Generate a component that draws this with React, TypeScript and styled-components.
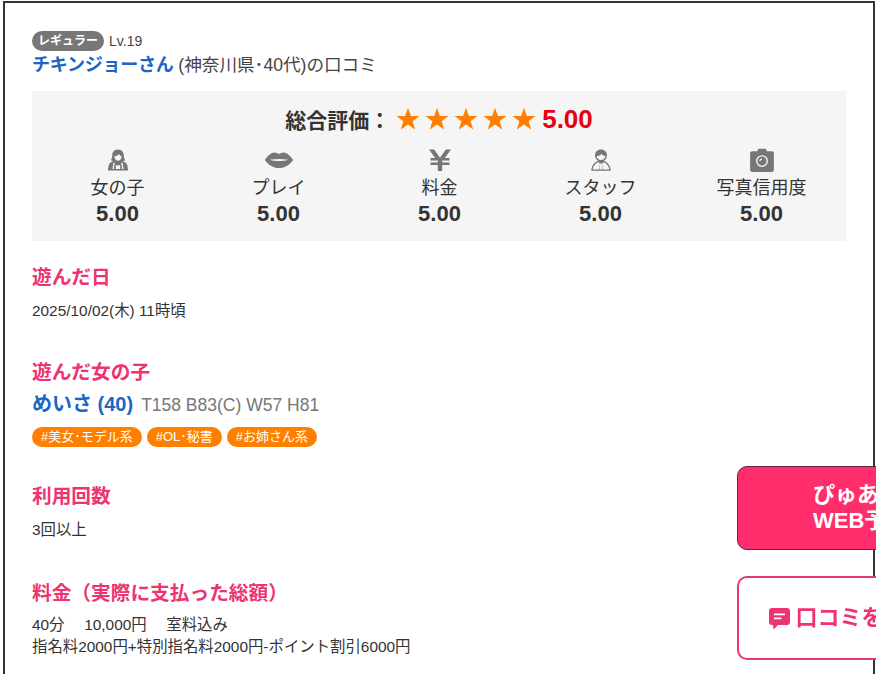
import React from "react";
import styled, { createGlobalStyle } from "styled-components";

const Global = createGlobalStyle`
  html, body { margin: 0; padding: 0; background: #fff; overflow: hidden; }
  body { font-family: "Liberation Sans", "Noto Sans CJK JP", sans-serif; color: #333; }
`;
const Frame = styled.div`
  box-sizing: border-box; width: 872px; height: 673px; margin: 1px 0 0 3px;
  border: 2px solid #333; border-bottom: 0; padding: 28px 27px 0; overflow: hidden;
`;
const Meta = styled.div`display: flex; align-items: center; gap: 5px; height: 20px;`;
const RankBadge = styled.span`
  display: flex; align-items: center; justify-content: center; width: 72px; height: 20px;
  border-radius: 10px; background: #777; color: #fff; font-size: 12px; font-weight: 700; line-height: 20px;
`;
const Level = styled.span`font-size: 14px; color: #444;`;
const ReviewerLine = styled.div`font-size: 17.6px; line-height: 26px; margin-top: 1px; color: #444; white-space: nowrap;`;
const Reviewer = styled.span`font-size: 18px; font-weight: 700; color: #1a66c4; letter-spacing: -0.25px;`;
const Panel = styled.div`
  margin-top: 13px; height: 150px; box-sizing: border-box; background: #f5f5f5; padding: 12px 5px 0;
`;
const TotalRow = styled.div`display: flex; justify-content: center; align-items: center; height: 32px;`;
const TotalLabel = styled.span`font-size: 21px; font-weight: 700; color: #333; margin-right: 6px;`;
const Stars = styled.span`display: flex; gap: 5px; margin-right: 6px;`;
const TotalScore = styled.span`font-size: 26px; font-weight: 700; color: #e60012;`;
const Scores = styled.div`display: grid; grid-template-columns: repeat(5, 161px); margin-top: 13px;`;
const ScoreItem = styled.div`display: flex; flex-direction: column; align-items: center;`;
const ScoreIcon = styled.svg`width: 24px; height: 24px; display: block; fill: #777;`;
const LipsIcon = styled(ScoreIcon)`width: 30px;`;
const CameraIcon = styled(ScoreIcon)`width: 26px; height: 26px; margin: -1px 0;`;
const ScoreLabel = styled.div`font-size: 18px; line-height: 26px; color: #333; margin-top: 3px; white-space: nowrap;`;
const ScoreValue = styled.div`font-size: 22px; font-weight: 700; line-height: 28px; color: #333; margin-top: -1px;`;
const Section = styled.section<{ $top: number }>`margin-top: ${(p) => p.$top}px;`;
const Heading = styled.h3`margin: 0; font-size: 19.7px; line-height: 28px; font-weight: 700; color: #ee3370;`;
const Body = styled.p<{ $top?: number }>`margin: ${(p) => p.$top ?? 9}px 0 0; font-size: 15.4px; line-height: 22px; color: #333;`;
const GirlLine = styled.div`display: flex; align-items: baseline; gap: 8px; margin-top: 3px; line-height: 30px;`;
const GirlName = styled.span`font-size: 20px; font-weight: 700; color: #1a66c4;`;
const GirlSpec = styled.span`font-size: 17.5px; color: #777;`;
const Tags = styled.div`display: flex; gap: 5px; margin-top: 7px;`;
const Tag = styled.span`
  height: 20px; line-height: 20px; padding: 0 9px; border-radius: 10px; background: #ff7f00;
  color: #fff; font-size: 13px; white-space: nowrap;
`;
const FloatButton = styled.div<{ $top: number; $outline?: boolean }>`
  position: fixed; left: 737px; top: ${(p) => p.$top}px; width: 260px; height: 84px; box-sizing: border-box;
  border-radius: 10px; display: flex; align-items: center; justify-content: center;
  font-size: 22px; font-weight: 700; line-height: 26px;
  background: ${(p) => (p.$outline ? "#fff" : "#ff2d6b")};
  color: ${(p) => (p.$outline ? "#ee3370" : "#fff")};
  border: ${(p) => (p.$outline ? "2px solid #e8376f" : "1px solid #5a2a3c")};
`;
const ButtonLines = styled.div`display: flex; flex-direction: column; align-items: flex-start; padding-left: 2px;`;
const ButtonRow = styled.div`display: flex; align-items: center; gap: 4px; padding-left: 6px;`;

const Star = () => (
  <svg width="24" height="24" viewBox="0 0 24 24" fill="#ff7f00"><path d="M12 1l2.9 8.1h8.6l-6.9 5.1 2.6 8.3L12 17.4l-7.2 5.1 2.6-8.3L.5 9.100h8.600z" /></svg>
);
const Girl = () => (
  <ScoreIcon viewBox="0 0 24 24"><path d="M12 1.500c-4 0-5.800 2.800-5.800 6 0 2.200-.6 3.600-1.400 4.800l2.500 1c-2.800 1-4.300 2.300-4.800 4.700l-.6 4.500h20.200l-.6-4.500c-.5-2.400-2-3.700-4.800-4.700l2.500-1c-.8-1.200-1.400-2.600-1.400-4.800 0-3.200-1.800-6-5.800-6zM8.300 8.300c1.800-.1 3.600-.8 4.700-2.300.6 1.200 1.500 2 2.700 2.300-.1 2.700-1.700 4.500-3.700 4.500s-3.600-1.800-3.700-4.500zM8 14.500l1.300 1.200c-1 .4-1.200 1.300-1.200 2.300v3h-1.600l.5-4c.1-1 .4-1.800 1-2.500zm8 0c.6.700.9 1.500 1 2.500l.5 4h-1.600v-3c0-1-.2-1.900-1.200-2.300zM9.800 17c1.400.5 3 .5 4.400 0v4H9.800z" fillRule="evenodd" /></ScoreIcon>
);
const Lips = () => (
  <LipsIcon viewBox="0 2 28 20"><path d="M.8 12C3.500 8.200 6.700 5 9.700 5c1.800 0 3.100.9 4.300 1.500C15.200 5.900 16.500 5 18.300 5c3 0 6.200 3.200 8.900 7-3.200 4.500-7.500 7.500-13.200 7.500S4 16.500.8 12zm4.700-.2c2.700 1 5.500 1.200 8.500 1.200s5.800-.2 8.500-1.200c-2.800-.5-5.600-.7-8.500-.7s-5.700.2-8.500.7z" fillRule="evenodd" /></LipsIcon>
);
const Yen = () => (
  <ScoreIcon viewBox="0 0 24 24"><path d="M1 1.500h5.200L12 9.800l5.800-8.300H23l-6.200 8.500h4.700v2.600h-7.300v1.800h7.300V17h-7.300v6H9.800v-6H2.500v-2.600h7.300v-1.800H2.500V10h4.700z" /></ScoreIcon>
);
const Staff = () => (
  <ScoreIcon viewBox="0 0 24 24"><path d="M12 1.500c-3.600 0-6 2.500-6 5.800 0 2.500 1.300 4.600 3.200 5.600C5.500 14 2.700 17 2.200 22.800h19.600C21.300 17 18.500 14 14.800 12.900c1.900-1 3.200-3.100 3.200-5.600 0-3.300-2.400-5.800-6-5.800zM7.600 8c2 0 3.700-.6 5-2 .8 1.200 2.200 1.900 3.800 2-.3 2.500-2.100 4-4.400 4S7.900 10.500 7.600 8zM9.500 14.200l1.500 1.500-.8 5.900H3.700c.5-3.800 2.600-6.400 5.800-7.400zm5 0c3.200 1 5.300 3.600 5.800 7.400h-6.500l-.8-5.900zM12 15l.8.8.5 5.800h-2.600l.5-5.800z" fillRule="evenodd" /></ScoreIcon>
);
const Camera = () => (
  <CameraIcon viewBox="0 0 24 24"><path d="M8.500 1.500h7l1 2.500H21c1.200 0 2 .8 2 2v15c0 1.200-.8 2-2 2H3c-1.200 0-2-.8-2-2V6c0-1.200.8-2 2-2h4.500zM12 7.500a5.500 5.500 0 1 0 0 11 5.500 5.500 0 0 0 0-11zm0 1.300a4.200 4.200 0 1 1 0 8.400 4.200 4.200 0 0 1 0-8.400zm0 1.700a2.500 2.500 0 0 0-2.500 2.500h1.200a1.300 1.300 0 0 1 1.300-1.300z" fillRule="evenodd" /></CameraIcon>
);
const Bubble = () => (
  <svg width="23" height="23" viewBox="0 0 23 23" fill="#ee3370"><path d="M4 1h15c1.700 0 3 1.300 3 3v11c0 1.700-1.300 3-3 3h-9l-4.500 4.500-.5-4.500H4c-1.700 0-3-1.300-3-3V4c0-1.700 1.300-3 3-3z" /><path d="M6 6.500h11v1.800H6zM6 10.500h7.500v1.800H6z" fill="#fff" /></svg>
);

const scores: [React.ReactNode, string][] = [
  [<Girl />, "女の子"], [<Lips />, "プレイ"], [<Yen />, "料金"], [<Staff />, "スタッフ"], [<Camera />, "写真信用度"],
];

export default function App() {
  return (
    <>
      <Global />
      <Frame>
        <Meta><RankBadge>レギュラー</RankBadge><Level>Lv.19</Level></Meta>
        <ReviewerLine><Reviewer>チキンジョーさん</Reviewer> (神奈川県･40代)の口コミ</ReviewerLine>
        <Panel>
          <TotalRow>
            <TotalLabel>総合評価：</TotalLabel>
            <Stars><Star /><Star /><Star /><Star /><Star /></Stars>
            <TotalScore>5.00</TotalScore>
          </TotalRow>
          <Scores>
            {scores.map(([icon, label]) => (
              <ScoreItem key={label}>{icon}<ScoreLabel>{label}</ScoreLabel><ScoreValue>5.00</ScoreValue></ScoreItem>
            ))}
          </Scores>
        </Panel>
        <Section $top={22}><Heading>遊んだ日</Heading><Body>2025/10/02(木) 11時頃</Body></Section>
        <Section $top={36}>
          <Heading>遊んだ女の子</Heading>
          <GirlLine><GirlName>めいさ (40)</GirlName><GirlSpec>T158 B83(C) W57 H81</GirlSpec></GirlLine>
          <Tags><Tag>#美女･モデル系</Tag><Tag>#OL･秘書</Tag><Tag>#お姉さん系</Tag></Tags>
        </Section>
        <Section $top={35}><Heading>利用回数</Heading><Body>3回以上</Body></Section>
        <Section $top={38}>
          <Heading>料金（実際に支払った総額）</Heading>
          <Body $top={7}>40分　 10,000円　 室料込み<br />指名料2000円+特別指名料2000円-ポイント割引6000円</Body>
        </Section>
      </Frame>
      <FloatButton $top={466}><ButtonLines><span>ぴゅあらば</span><span>WEB予約</span></ButtonLines></FloatButton>
      <FloatButton $top={576} $outline><ButtonRow><Bubble />口コミを投稿する</ButtonRow></FloatButton>
    </>
  );
}
